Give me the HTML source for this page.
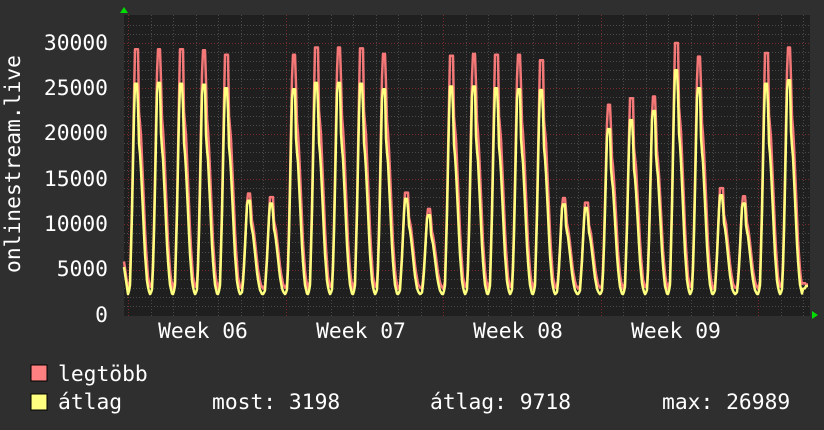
<!DOCTYPE html>
<html><head><meta charset="utf-8"><style>
html,body{margin:0;padding:0;background:#2f2f2f;width:824px;height:430px;overflow:hidden}
svg text{font-family:"DejaVu Sans Mono","Liberation Mono",monospace;fill:#fff;font-size:21.3px}
</style></head><body>
<svg id="s" width="824" height="430" xmlns="http://www.w3.org/2000/svg">
<rect x="0" y="0" width="824" height="430" fill="#2f2f2f"/>
<rect x="124" y="15" width="686" height="301" fill="#1f1f1f"/>
<g id="grid"></g>
<path id="red" fill="none" stroke="#f47878" stroke-width="2.5" stroke-linejoin="round"/>
<path id="yel" fill="none" stroke="#ffff80" stroke-width="2.5" stroke-linejoin="round"/>
<polygon points="120,13 128,13 124,7" fill="#00dd00"/>
<polygon points="812,311 812,319 818,315" fill="#00dd00"/>
<g text-anchor="end">
<text x="108" y="50">30000</text>
<text x="108" y="95">25000</text>
<text x="108" y="140">20000</text>
<text x="108" y="186">15000</text>
<text x="108" y="231">10000</text>
<text x="108" y="276">5000</text>
<text x="108" y="322">0</text>
</g>
<g text-anchor="middle">
<text x="203" y="338">Week 06</text>
<text x="361" y="338">Week 07</text>
<text x="518" y="338">Week 08</text>
<text x="676" y="338">Week 09</text>
</g>
<text transform="translate(20,164) rotate(-90)" text-anchor="middle">onlinestream.live</text>
<rect x="31" y="365" width="16" height="16" fill="#ff8080" stroke="#000" stroke-width="1"/>
<rect x="31" y="394" width="16" height="16" fill="#ffff80" stroke="#000" stroke-width="1"/>
<text x="58" y="381">legtöbb</text>
<text x="58" y="409">átlag</text>
<text x="212" y="409">most: 3198</text>
<text x="430" y="409">átlag: 9718</text>
<text x="662" y="409">max: 26989</text>
</svg>
<script>
var NS="http://www.w3.org/2000/svg",g=document.getElementById('grid');
function ln(x1,y1,x2,y2,c){var l=document.createElementNS(NS,'line');l.setAttribute('x1',x1);l.setAttribute('y1',y1);l.setAttribute('x2',x2);l.setAttribute('y2',y2);l.setAttribute('stroke',c);l.setAttribute('stroke-width',1);l.setAttribute('stroke-dasharray','1,2');g.appendChild(l);}
function Y(v){return 315-v*272/30000;}
for(var v=1000;v<=32000;v+=1000){var y=Math.round(Y(v))+.5;ln(124,y,810,y,v%5000==0?'#7a2a2a':'#4a4a4a');}
for(var k=0;k<31;k++){var x=Math.round(128+22.5*k)+.5;if(x>810)break;ln(x,15,x,316,k%7==0?'#7a2a2a':'#4a4a4a');}
var rp=[29300,29300,29300,29200,28700,13400,13000,28700,29500,29500,29400,28800,13500,11700,28600,28800,28700,28700,28100,12900,12400,23200,23900,24100,30000,28500,14000,13100,28900,29500,4200];
var yp=[25500,25600,25500,25400,25000,12600,12300,24900,25600,25600,25500,24900,12800,11000,25200,25200,25000,24900,24800,12200,11800,20500,21500,22500,27000,25000,13200,12300,25500,25900,4000];
var prof=[[0,0],[2,0.03],[4,0.35],[6,0.8],[7,1],[10,1],[11,0.74],[13,0.64],[15,0.45],[17.5,0.2],[20,0.05],[22.5,0]];
function sh(d){for(var i=1;i<prof.length;i++){if(d<=prof[i][0]){var a=prof[i-1],b=prof[i];return a[1]+(b[1]-a[1])*(d-a[0])/(b[0]-a[0]);}}return 0;}
function build(pk,base,sc){var s='';for(var x=124;x<=808;x+=1){var k=Math.floor((x-128)/22.5),d=(x-128)-22.5*k,p;if(k<0){p=pk[4];}else p=pk[Math.min(k,pk.length-1)];
var f=sh(d*sc);var b=base;if(k==30){b=base+600;}var v=b+(p-b)*f;if(x<128)v=base+3000*(1-(x-124)/4);if(x>=806)v=p*0.8;s+=(s?'L':'M')+x+','+Y(v).toFixed(1);}return s;}
document.getElementById('red').setAttribute('d',build(rp,2900,1));
document.getElementById('yel').setAttribute('d',build(yp,2300,1.04));
</script>
</body></html>
